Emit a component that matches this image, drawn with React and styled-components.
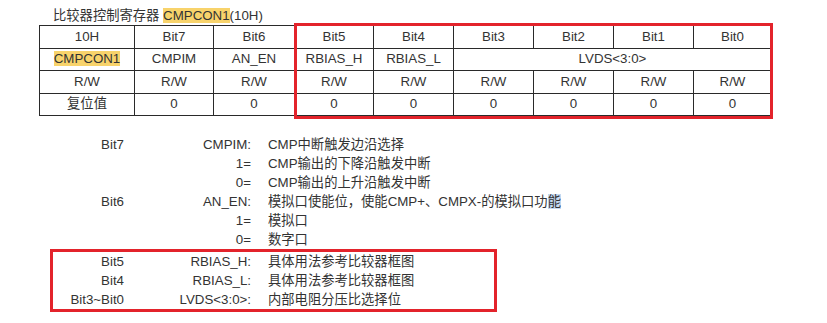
import React from "react";
import styled, { createGlobalStyle } from "styled-components";

const GlobalStyle = createGlobalStyle`
  html, body {
    margin: 0;
    padding: 0;
    background: #ffffff;
  }
  body {
    font-family: "Liberation Sans", Arial, "Noto Sans CJK SC", sans-serif;
    color: #333333;
  }
`;

const Page = styled.div`
  width: 827px;
  height: 323px;
  padding-left: 39px;
  box-sizing: border-box;
  font-size: 13.3px;
`;

const Title = styled.div`
  height: 25px;
  padding-top: 7px;
  box-sizing: border-box;
  margin-left: 14px;
  line-height: 18px;
  font-size: 13.3px;
`;

const Mark = styled.span`
  background: #f8d36b;
`;

const TableWrap = styled.div`
  position: relative;
  width: 732px;
  height: 91px;
`;

const RegTable = styled.table`
  width: 732px;
  border-collapse: collapse;
  table-layout: fixed;
`;

const Cell = styled.td`
  border: 1px solid #2a2a2a;
  height: 21.5px;
  padding: 0;
  text-align: center;
  vertical-align: middle;
  font-size: 13.3px;
  line-height: 14px;
  color: #333333;
`;

const Highlight = styled.div`
  position: absolute;
  left: 255px;
  top: -2px;
  width: 479px;
  height: 96px;
  border: 3px solid #e3232b;
  box-sizing: border-box;
  pointer-events: none;
`;

const Desc = styled.div`
  margin-top: 19px;
  display: flex;
  flex-direction: column;
`;

const Row = styled.div`
  display: grid;
  grid-template-columns: ${(p) => p.$lead}px 110px 1fr;
  column-gap: 17px;
  height: 19px;
  line-height: 19px;
  font-size: 13.3px;
  white-space: nowrap;
  overflow: visible;
`;

const Right = styled.span`
  text-align: right;
`;

const Box = styled.div`
  margin-left: 11px;
  width: 447px;
  height: 63px;
  border: 3px solid #e3232b;
  box-sizing: border-box;
  display: flex;
  flex-direction: column;
`;

const Selected = styled.span`
  background: #c6d9f1;
`;

const widths = [95, 79, 81, 79, 80, 80, 80, 80, 78];

const header = ["10H", "Bit7", "Bit6", "Bit5", "Bit4", "Bit3", "Bit2", "Bit1", "Bit0"];
const rw = ["R/W", "R/W", "R/W", "R/W", "R/W", "R/W", "R/W", "R/W", "R/W"];
const reset = ["复位值", "0", "0", "0", "0", "0", "0", "0", "0"];

const lines = [
  ["Bit7", "CMPIM:", "CMP中断触发边沿选择"],
  ["", "1=", "CMP输出的下降沿触发中断"],
  ["", "0=", "CMP输出的上升沿触发中断"],
  ["Bit6", "AN_EN:", <>模拟口使能位，使能CMP+、CMPX-的模拟口功<Selected>能</Selected></>],
  ["", "1=", "模拟口"],
  ["", "0=", "数字口"],
];

const boxed = [
  ["Bit5", "RBIAS_H:", "具体用法参考比较器框图"],
  ["Bit4", "RBIAS_L:", "具体用法参考比较器框图"],
  ["Bit3~Bit0", "LVDS<3:0>:", "内部电阻分压比选择位"],
];

export default function App() {
  return (
    <Page>
      <GlobalStyle />
      <Title>
        比较器控制寄存器 <Mark>CMPCON1</Mark>(10H)
      </Title>
      <TableWrap>
        <RegTable>
          <colgroup>
            {widths.map((w, i) => (
              <col key={i} style={{ width: w }} />
            ))}
          </colgroup>
          <tbody>
            <tr>
              {header.map((t, i) => (
                <Cell key={i}>{t}</Cell>
              ))}
            </tr>
            <tr>
              <Cell>
                <Mark>CMPCON1</Mark>
              </Cell>
              <Cell>CMPIM</Cell>
              <Cell>AN_EN</Cell>
              <Cell>RBIAS_H</Cell>
              <Cell>RBIAS_L</Cell>
              <Cell colSpan={4}>LVDS&lt;3:0&gt;</Cell>
            </tr>
            <tr>
              {rw.map((t, i) => (
                <Cell key={i}>{t}</Cell>
              ))}
            </tr>
            <tr>
              {reset.map((t, i) => (
                <Cell key={i}>{t}</Cell>
              ))}
            </tr>
          </tbody>
        </RegTable>
        <Highlight />
      </TableWrap>
      <Desc>
        {lines.map((l, i) => (
          <Row key={i} $lead={85}>
            <Right>{l[0]}</Right>
            <Right>{l[1]}</Right>
            <span>{l[2]}</span>
          </Row>
        ))}
        <Box>
          {boxed.map((l, i) => (
            <Row key={i} $lead={71}>
              <Right>{l[0]}</Right>
              <Right>{l[1]}</Right>
              <span>{l[2]}</span>
            </Row>
          ))}
        </Box>
      </Desc>
    </Page>
  );
}
